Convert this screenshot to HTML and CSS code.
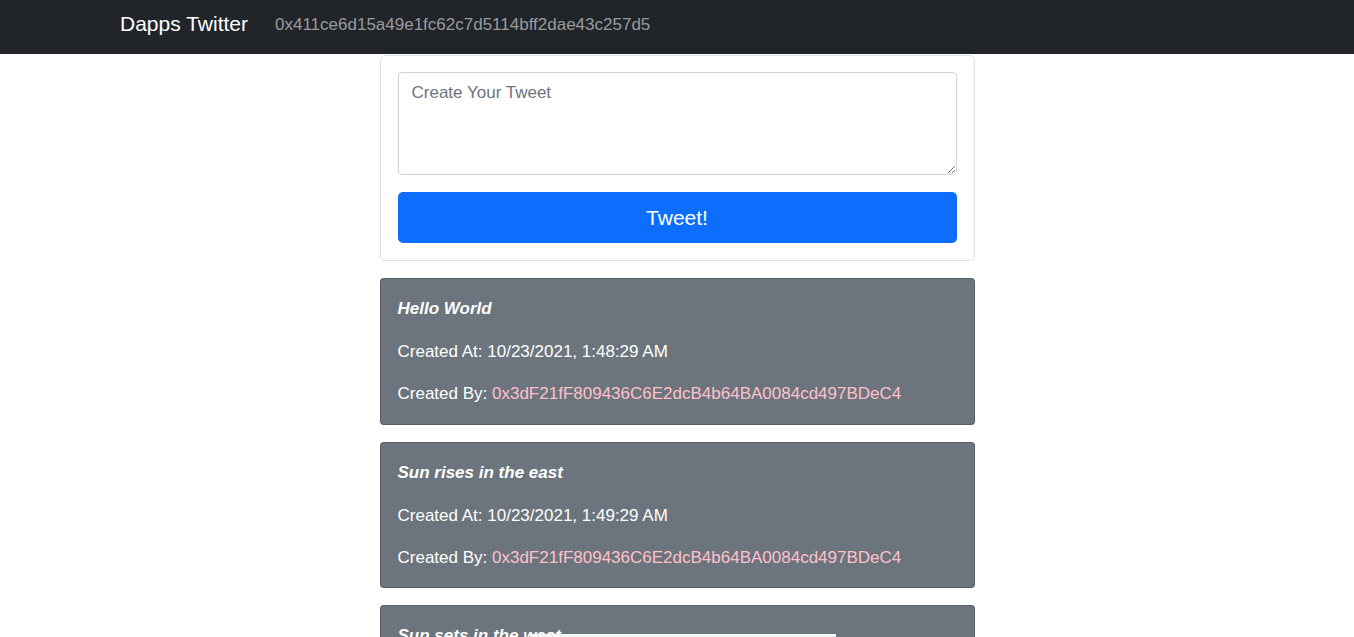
FILE: index.html
```html
<!DOCTYPE html>
<html lang="en">
<head>
<meta charset="utf-8">
<title>Dapps Twitter</title>
<link rel="stylesheet" href="styles.css">
</head>
<body>
<nav class="navbar">
  <div class="nav-inner">
    <span class="brand">Dapps Twitter</span>
    <span class="account">0x411ce6d15a49e1fc62c7d5114bff2dae43c257d5</span>
  </div>
</nav>
<main class="feed">
  <form class="compose">
    <textarea class="tweet-input" placeholder="Create Your Tweet"></textarea>
    <button type="button" class="tweet-btn">Tweet!</button>
  </form>
  <article class="tweet">
    <p class="tweet-title">Hello World</p>
    <p class="tweet-line">Created At: 10/23/2021, 1:48:29 AM</p>
    <p class="tweet-line">Created By: <span class="addr">0x3dF21fF809436C6E2dcB4b64BA0084cd497BDeC4</span></p>
  </article>
  <article class="tweet">
    <p class="tweet-title">Sun rises in the east</p>
    <p class="tweet-line">Created At: 10/23/2021, 1:49:29 AM</p>
    <p class="tweet-line">Created By: <span class="addr">0x3dF21fF809436C6E2dcB4b64BA0084cd497BDeC4</span></p>
  </article>
  <article class="tweet">
    <p class="tweet-title">Sun sets in the west</p>
    <p class="tweet-line">Created At: 10/23/2021, 1:50:29 AM</p>
    <p class="tweet-line">Created By: <span class="addr">0x3dF21fF809436C6E2dcB4b64BA0084cd497BDeC4</span></p>
  </article>
</main>
<div class="bottom-strip"></div>
</body>
</html>
```
FILE: styles.css
```css
* { box-sizing: border-box; }
html, body { margin: 0; padding: 0; }
body {
  font-family: "Liberation Sans", Arial, sans-serif;
  font-size: 16px;
  line-height: 1.5;
  color: #212529;
  background: #fff;
}
.navbar {
  background: #212529;
  height: 54px;
  display: flex;
  align-items: center;
  padding-bottom: 5px;
}
.nav-inner {
  width: 1140px;
  margin: 0 auto;
  padding: 0 12px 0 13px;
  display: flex;
  align-items: center;
}
.brand {
  color: #fff;
  font-size: 21px;
  line-height: 30px;
  margin-right: 27px;
  position: relative;
  top: -1px;
}
.account {
  color: rgba(255,255,255,.55);
  font-size: 17px;
  line-height: 24px;
}
.feed {
  width: 595px;
  margin: 1px auto 0;
  display: flex;
  flex-direction: column;
  gap: 17px;
}
.compose {
  border: 1px solid #dee2e6;
  border-radius: 5px;
  padding: 16px 17px 17px;
  display: flex;
  flex-direction: column;
  gap: 17px;
  margin: 0;
}
.tweet-input {
  height: 103px;
  border: 1px solid #ced4da;
  border-radius: 4px;
  padding: 8px 13px;
  font-family: inherit;
  font-size: 17px;
  line-height: 24px;
  color: #212529;
  resize: vertical;
}
.tweet-input::placeholder { color: #6c757d; }
.tweet-btn {
  height: 51px;
  border: 0;
  border-radius: 5px;
  background: #0d6efd;
  color: #fff;
  font-family: inherit;
  font-size: 21px;
}
.tweet {
  background: #6c757d;
  border: 1px solid rgba(0,0,0,.2);
  border-radius: 4px;
  padding: 17px 17px 17.5px;
  color: #fff;
}
.tweet p { margin: 0 0 17px; font-size: 17px; line-height: 25px; }
.tweet p:last-child { margin-bottom: 0; }
.tweet .tweet-title { font-weight: bold; font-style: italic; margin-bottom: 18px; }
.addr { color: pink; }
.bottom-strip {
  position: fixed;
  left: 530px;
  bottom: 0;
  width: 306px;
  height: 3px;
  background: #f5f5f5;
}
```
